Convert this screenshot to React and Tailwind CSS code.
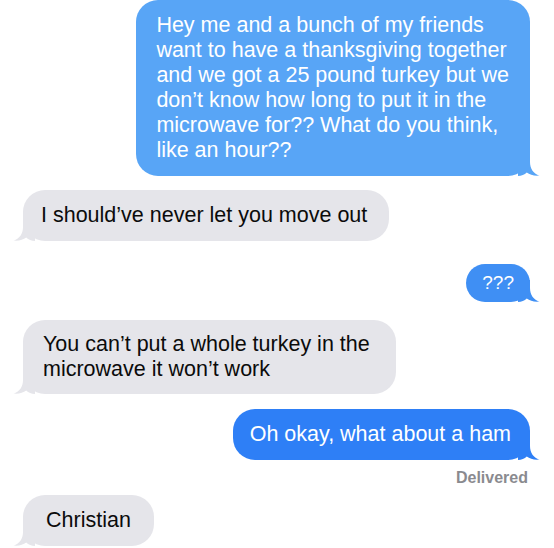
import React from "react";

const font = { fontFamily: '"Liberation Sans", Arial, sans-serif' };

const TailRight = ({ color }) => (
  <svg className="absolute bottom-0 right-[-10px]" width="22" height="22" viewBox="0 0 22 22">
    <path d="M0 0H12V8C12 14.5 15 19.5 21.5 21.6C16.5 22.2 11.8 21 8.8 18.6C6.5 20.6 3.5 22 0 22Z" fill={color} />
  </svg>
);

const TailLeft = ({ color }) => (
  <svg className="absolute bottom-0 left-[-10px]" width="22" height="22" viewBox="0 0 22 22">
    <path d="M22 0H10V8C10 14.5 7 19.5 0.5 21.6C5.5 22.2 10.2 21 13.2 18.6C15.5 20.6 18.5 22 22 22Z" fill={color} />
  </svg>
);

const Sent = ({ children, className, color }) => (
  <div className="flex justify-end pr-6">
    <div
      className={"relative rounded-[22px] text-white whitespace-nowrap " + className}
      style={{ backgroundColor: color }}
    >
      {children}
      <TailRight color={color} />
    </div>
  </div>
);

const Received = ({ children, className }) => (
  <div className="flex justify-start pl-[23px]">
    <div className={"relative rounded-[22px] bg-[#e5e5ea] text-[#0b0b0b] whitespace-nowrap " + className}>
      {children}
      <TailLeft color="#e5e5ea" />
    </div>
  </div>
);

export default function App() {
  return (
    <div className="w-[554px] h-[548px] overflow-hidden bg-white flex flex-col" style={font}>
      <Sent color="#58a5f6" className="pl-5 pr-[21px] pt-[13px] pb-[13px] text-[21.5px] leading-[25px]">
        Hey me and a bunch of my friends
        <br />
        want to have a thanksgiving together
        <br />
        and we got a 25 pound turkey but we
        <br />
        don’t know how long to put it in the
        <br />
        microwave for?? What do you think,
        <br />
        like an hour??
      </Sent>

      <div className="mt-[14px]">
        <Received className="pl-[18px] pr-[22px] py-[13px] text-[21.5px] leading-[25px]">
          I should’ve never let you move out
        </Received>
      </div>

      <div className="mt-[23px]">
        <Sent color="#3f8ff4" className="px-[16px] py-[8px] text-[19px] leading-[22px]">
          ???
        </Sent>
      </div>

      <div className="mt-[18px]">
        <Received className="pl-[20px] pr-[26px] py-[12px] text-[21.5px] leading-[25px]">
          You can’t put a whole turkey in the
          <br />
          microwave it won’t work
        </Received>
      </div>

      <div className="mt-[15px]">
        <Sent color="#2e7ff6" className="pl-[17px] pr-[19px] py-[13px] text-[21.5px] leading-[25px]">
          Oh okay, what about a ham
        </Sent>
      </div>

      <div className="flex justify-end pr-[26px] mt-[8px]">
        <span className="text-[16px] leading-[20px] font-bold text-[#8a8a8f]">Delivered</span>
      </div>

      <div className="mt-[7px]">
        <Received className="px-[23px] py-[13px] text-[21.5px] leading-[25px]">
          Christian
        </Received>
      </div>
    </div>
  );
}
